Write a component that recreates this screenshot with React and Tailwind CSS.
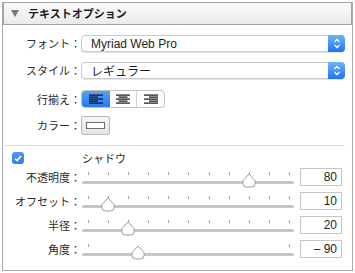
import React from 'react'

const jp = "font-['Noto_Sans_CJK_JP','Noto_Sans',sans-serif]"
const latin = "font-['Liberation_Sans','Noto_Sans_CJK_JP',sans-serif]"

function Label({ children }) {
  return (
    <div className={`w-[78px] shrink-0 text-right text-[11px] leading-none text-[#2b2b2b] ${jp}`}>
      {children}
    </div>
  )
}

function Stepper() {
  return (
    <div className="w-[17px] h-full rounded-r-[4px] bg-gradient-to-b from-[#6db2fb] to-[#1f74f4] flex items-center justify-center">
      <svg width="8" height="11" viewBox="0 0 8 11" fill="none" stroke="white" strokeWidth="1.3">
        <path d="M1.5 4 L4 1.5 L6.5 4" />
        <path d="M1.5 7 L4 9.5 L6.5 7" />
      </svg>
    </div>
  )
}

function Select({ value, className = '' }) {
  return (
    <div className="ml-0 w-[264px] h-[17px] flex rounded-[4px] border border-[#c9c9c9] bg-white shadow-[0_1px_0_#e6e6e6]">
      <div className={`flex-1 pl-[9px] flex items-center text-[12px] leading-none text-[#1e1e1e] ${className}`}>
        {value}
      </div>
      <div className="-my-px -mr-px">
        <Stepper />
      </div>
    </div>
  )
}

function AlignIcon({ kind }) {
  const rows = [0, 1, 2, 3, 4]
  return (
    <svg width="14" height="11" viewBox="0 0 14 11">
      {rows.map(i => {
        const long = i % 2 === 0
        const w = long ? 14 : 9
        let x = 0
        if (kind === 'center') x = (14 - w) / 2
        if (kind === 'right') x = 14 - w
        return <rect key={i} x={x} y={i * 2 + 0.5} width={w} height="1.2" fill="#111" />
      })}
    </svg>
  )
}

function Thumb() {
  return (
    <svg width="14" height="15" viewBox="0 0 14 15">
      <path
        d="M7 1 L13 7.5 V10.5 Q13 14 9.5 14 H4.5 Q1 14 1 10.5 V7.5 Z"
        fill="white"
        stroke="#9c9c9c"
        strokeWidth="1"
      />
    </svg>
  )
}

function Slider({ frac, ticks }) {
  return (
    <div className="relative ml-[1px] w-[212px] h-[18px] flex flex-col">
      <div className="ml-[6px] w-[202px] mt-[4px] h-[3px] flex justify-between">
        {[...Array(ticks)].map((_, i) => (
          <div key={i} className="w-px h-[3px] bg-[#a0a0a0]" />
        ))}
      </div>
      <div className="mt-[6px] h-[3px] rounded-full bg-[#c6c6c6]" />
      <div className="absolute top-[5px]" style={{ left: 6 + frac * 201 - 7 }}>
        <Thumb />
      </div>
    </div>
  )
}

function SliderRow({ label, frac, ticks, value }) {
  return (
    <div className="flex items-center h-[18px]">
      <Label>{label}</Label>
      <Slider frac={frac} ticks={ticks} />
      <div className={`ml-[6px] w-[42px] h-[18px] border border-[#c6c6c6] bg-white flex items-center justify-end pr-[4px] text-[12px] leading-none text-[#1e1e1e] ${latin}`}>
        {value}
      </div>
    </div>
  )
}

export default function App() {
  return (
    <div className="w-[355px] h-[273px] bg-white pt-[2px] pl-[2px]">
      <div className="w-[351px] h-[269px] border-x border-b border-[#a9a9a9] flex flex-col">
        {/* Header */}
        <div className="h-[23px] border border-[#a3a3a3] bg-gradient-to-b from-[#f8f8f8] via-[#f3f3f3] to-[#eaeaea] flex items-center pl-[7px]">
          <svg width="8" height="7" viewBox="0 0 8 7">
            <path d="M0 0 H8 L4 7 Z" fill="#7a7a7a" />
          </svg>
          <span className={`ml-[9px] text-[11px] font-bold leading-none text-[#1a1a1a] ${jp}`}>テキストオプション</span>
        </div>

        {/* Font */}
        <div className="mt-[10px] flex items-center">
          <Label>フォント：</Label>
          <Select value="Myriad Web Pro" className={latin} />
        </div>

        {/* Style */}
        <div className="mt-[10px] flex items-center">
          <Label>スタイル：</Label>
          <Select value="レギュラー" className={`text-[11px] ${jp}`} />
        </div>

        {/* Alignment */}
        <div className="mt-[11px] flex items-center">
          <Label>行揃え：</Label>
          <div className="w-[84px] h-[18px] flex rounded-[4px] border border-[#c3c3c3] bg-white overflow-hidden">
            <div className="w-[29px] -my-px -ml-px h-[18px] rounded-l-[4px] bg-gradient-to-b from-[#5aa5fa] to-[#2275f4] flex items-center justify-center">
              <AlignIcon kind="left" />
            </div>
            <div className="w-[27px] border-r border-[#d4d4d4] flex items-center justify-center">
              <AlignIcon kind="center" />
            </div>
            <div className="flex-1 flex items-center justify-center">
              <AlignIcon kind="right" />
            </div>
          </div>
        </div>

        {/* Color */}
        <div className="mt-[8px] flex items-center">
          <Label>カラー：</Label>
          <div className="w-[29px] h-[19px] rounded-[2px] border border-[#b9b9b9] bg-gradient-to-b from-[#f7f7f7] to-[#e4e4e4] flex items-center justify-center">
            <div className="w-[19px] h-[7px] border border-[#6c6c6c] bg-white" />
          </div>
        </div>

        {/* Separator */}
        <div className="mt-[10px] ml-[2px] w-[340px] h-px bg-[#dedede]" />

        {/* Shadow */}
        <div className="mt-[6px] h-[12px] flex items-center">
          <div className="ml-[9px] w-[12px] h-[12px] rounded-[3px] bg-gradient-to-b from-[#4f98f8] to-[#2a7cf4] flex items-center justify-center">
            <svg width="8" height="7" viewBox="0 0 8 7" fill="none" stroke="white" strokeWidth="1.6">
              <path d="M1 3.6 L3.2 5.6 L7 1" />
            </svg>
          </div>
          <span className={`ml-[58px] text-[11px] leading-none text-[#2b2b2b] ${jp}`}>シャドウ</span>
        </div>

        <div className="mt-[4px] flex flex-col gap-[6px]">
          <SliderRow label="不透明度：" frac={0.8} ticks={11} value="80" />
          <SliderRow label="オフセット：" frac={0.1} ticks={11} value="10" />
          <SliderRow label="半径：" frac={0.2} ticks={11} value="20" />
          <SliderRow label="角度：" frac={0.25} ticks={2} value="– 90" />
        </div>
      </div>
    </div>
  )
}
